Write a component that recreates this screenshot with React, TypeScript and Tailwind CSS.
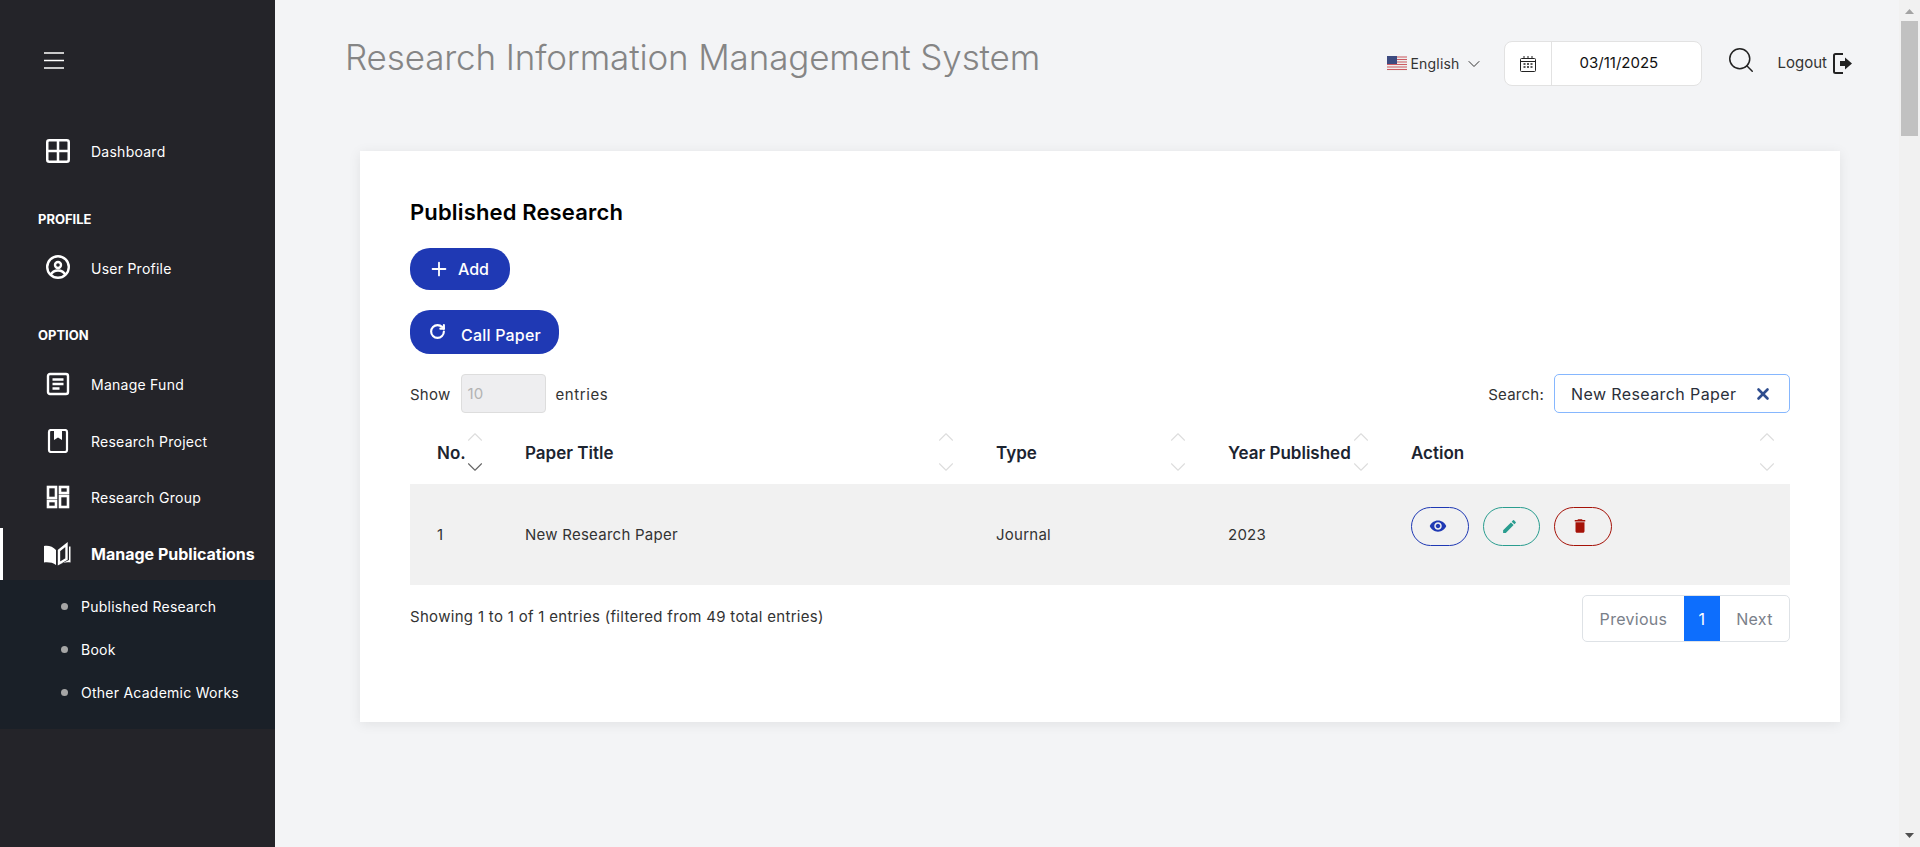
/**
 * Published Research page - sidebar, header and filtered table
 */

import { useState } from 'react';
import type { ReactNode } from 'react';
import { ChevronDown, ChevronUp, RotateCw, Search, Plus, X } from 'lucide-react';

const font = 'font-[Inter,"Liberation_Sans",sans-serif]';

function SideItem({ icon, label, active }: { icon: ReactNode; label: string; active?: boolean }) {
  return (
    <div className={`flex h-[52px] items-center ${active ? 'border-l-[3px] border-white pl-[43px]' : 'pl-[46px]'}`}>
      <span className="flex w-[45px] shrink-0 text-white">{icon}</span>
      <span className={`text-white ${active ? 'text-[16px] font-bold' : 'text-[14px] tracking-[0.25px]'}`}>{label}</span>
    </div>
  );
}

function SortHead({ label, width, active }: { label: string; width: string; active?: boolean }) {
  return (
    <th className={`relative h-[61px] pl-[27px] pr-0 text-left text-[17px] font-semibold text-[#1c2430] ${width}`}>
      {label}
      <span className="absolute right-[10px] top-[1px] flex h-[56px] flex-col justify-between">
        <ChevronUp size={26} strokeWidth={1} className="text-[#dddddd]" />
        <ChevronDown size={26} strokeWidth={1} className={active ? 'text-[#666666]' : 'text-[#dddddd]'} />
      </span>
    </th>
  );
}

function RowButton({ color, width, children }: { color: string; width: string; children: ReactNode }) {
  return <button className={`flex h-[39px] items-center justify-center rounded-full border pr-[5px] ${width} ${color}`}>{children}</button>;
}

export default function App() {
  const [query] = useState('New Research Paper');

  return (
    <div className={`flex h-[847px] overflow-hidden bg-[#f3f4f6] ${font}`}>
      {/* Sidebar */}
      <aside className="flex w-[275px] shrink-0 flex-col bg-[#242429]">
        <div className="h-[125px] pl-[44px] pt-[52px]">
          <HamburgerIcon />
        </div>
        <SideItem icon={<WindowIcon />} label="Dashboard" />
        <p className="mt-[32px] pl-[38px] text-[13px] font-bold leading-[20px] text-white">PROFILE</p>
        <div className="mt-[13px]">
          <SideItem icon={<UserCircleIcon />} label="User Profile" />
        </div>
        <p className="mt-[31px] pl-[38px] text-[13px] font-bold leading-[20px] text-white">OPTION</p>
        <div className="mt-[13px] flex flex-col gap-[5px]">
          <SideItem icon={<NoteIcon />} label="Manage Fund" />
          <SideItem icon={<BookmarkIcon />} label="Research Project" />
          <div className="-mt-[1px]">
            <SideItem icon={<GroupIcon />} label="Research Group" />
          </div>
          <SideItem icon={<OpenBookIcon />} label="Manage Publications" active />
        </div>
        <div className="h-[149px] bg-[#1a2028] pl-[61px] pt-[5px]">
          {['Published Research', 'Book', 'Other Academic Works'].map((item) => (
            <div key={item} className="flex h-[43px] items-center">
              <span className="mr-[13px] h-[7px] w-[7px] rounded-full bg-[#a6a6a6]" />
              <span className="text-[14px] tracking-[0.25px] text-white">{item}</span>
            </div>
          ))}
        </div>
      </aside>

      {/* Main Content */}
      <main className="min-w-0 flex-1">
        <header className="flex h-[117px] items-start pl-[70px] pr-[47px]">
          <h1 className="mt-[31px] text-[35px] font-light tracking-[-0.14px] text-[#858585]">Research Information Management System</h1>
          <div className="ml-auto mt-[41px] flex items-center">
            <FlagIcon />
            <span className="ml-[3px] text-[14px] tracking-[0.2px] text-[#333333]">English</span>
            <ChevronUp size={20} strokeWidth={1.2} className="ml-[4px] rotate-180 text-[#333333]" />
            <div className="ml-[20px] flex h-[45px] w-[198px] items-center rounded-[8px] border border-[#e2e2e2] bg-white">
              <div className="flex h-full w-[47px] items-center justify-center border-r border-[#e2e2e2]">
                <CalendarIcon />
              </div>
              <span className="pl-[28px] text-[15px] text-[#111111]">03/11/2025</span>
            </div>
            <Search size={30} strokeWidth={1.2} className="ml-[24px] -mt-[8px] text-[#222222]" />
            <span className="ml-[22px] text-[15px] text-[#333333]">Logout</span>
            <LogoutIcon />
          </div>
        </header>

        <section className="ml-[85px] mt-[34px] h-[571px] w-[1480px] bg-white px-[50px] pt-[46px] shadow-[0_2px_12px_rgba(0,0,0,0.08)]">
          <h2 className="text-[22px] font-semibold leading-[30px] tracking-[0.15px] text-black">Published Research</h2>

          <button className="mt-[21px] flex h-[42px] w-[100px] items-center rounded-[20px] bg-[#1f39b4] pl-[18px] text-[16px] font-medium text-white">
            <Plus size={22} strokeWidth={2} className="mr-[8px]" />
            Add
          </button>
          <button className="mt-[20px] flex h-[44px] w-[149px] items-center rounded-[20px] bg-[#1f39b4] pl-[19px] text-[16px] font-medium tracking-[0.2px] text-white">
            <RotateCw size={17} strokeWidth={3} className="mb-[2px] mr-[15px]" />
            <span className="mt-[6px]">Call Paper</span>
          </button>

          {/* Table controls */}
          <div className="mt-[20px] flex h-[39px] items-center text-[15px] tracking-[0.25px] text-[#333333]">
            <span className="mt-[4px]">Show</span>
            <div className="ml-[10px] flex h-[39px] w-[85px] items-center rounded-[4px] border border-[#dddddd] bg-[#eeeef0] pl-[6px] pt-[2px] text-[#b3b3b3]">10</div>
            <span className="ml-[10px] mt-[4px] tracking-[0.6px]">entries</span>
            <span className="ml-auto mt-[4px]">Search:</span>
            <div className="ml-[10px] flex h-[39px] w-[236px] items-center rounded-[5px] border border-[#86b7fe] pl-[16px] pr-[17px] text-[16px] tracking-[0.4px] text-[#2a2f3a]">
              {query}
              <X size={18} strokeWidth={3.500} className="ml-auto text-[#2f4d8e]" />
            </div>
          </div>

          <table className="mt-[10px] w-full table-fixed border-collapse">
            <thead>
              <tr>
                <SortHead label="No." width="w-[88px]" active />
                <SortHead label="Paper Title" width="w-[471px]" />
                <SortHead label="Type" width="w-[232px]" />
                <SortHead label="Year Published" width="w-[183px]" />
                <SortHead label="Action" width="" />
              </tr>
            </thead>
            <tbody>
              <tr className="h-[101px] bg-[#f1f1f1] text-[15px] tracking-[0.25px] text-[#333333]">
                <td className="pl-[27px] pt-[2px]">1</td>
                <td className="pl-[27px] pt-[2px]">New Research Paper</td>
                <td className="pl-[27px] pt-[2px]">Journal</td>
                <td className="pl-[27px] pt-[2px]">2023</td>
                <td className="pl-[27px]">
                  <div className="-mt-[17px] flex gap-[14px]">
                    <RowButton color="border-[#1f39b4]" width="w-[58px]">
                      <EyeIcon />
                    </RowButton>
                    <RowButton color="border-[#2a9d8f]" width="w-[57px]">
                      <PencilIcon />
                    </RowButton>
                    <RowButton color="border-[#a51208]" width="w-[58px]">
                      <TrashIcon />
                    </RowButton>
                  </div>
                </td>
              </tr>
            </tbody>
          </table>

          {/* Footer */}
          <div className="mt-[10px] flex items-start text-[15px] tracking-[0.31px] text-[#333333]">
            <span className="mt-[11px]">Showing 1 to 1 of 1 entries (filtered from 49 total entries)</span>
            <div className="ml-auto flex h-[47px] items-stretch rounded-[5px] border border-[#dee2e6] text-[16px] tracking-[0.3px]">
              <span className="flex w-[101px] items-center justify-center text-[#7a808a]">Previous</span>
              <span className="flex w-[36px] items-center justify-center bg-[#0d6efd] text-white">1</span>
              <span className="flex w-[69px] items-center justify-center text-[#7a808a]">Next</span>
            </div>
          </div>
        </section>
      </main>

      {/* Scrollbar */}
      <div className="flex w-[21px] shrink-0 flex-col items-center bg-[#f1f1f1] pb-[9px] pt-[9px]">
        <svg width="9" height="5" viewBox="0 0 9 5" className="shrink-0">
          <path d="M4.500 0 9 5H0z" fill="#a3a3a3" />
        </svg>
        <div className="mt-[7px] h-[115px] w-[17px] bg-[#c1c1c1]" />
        <svg width="9" height="5" viewBox="0 0 9 5" className="mt-auto shrink-0">
          <path d="M0 0h9L4.500 5z" fill="#505050" />
        </svg>
      </div>
    </div>
  );
}

function HamburgerIcon() {
  return (
    <svg width="20" height="17" viewBox="0 0 20 17" stroke="white" strokeWidth="1.500">
      <path d="M0 1h20M0 8.500h20M0 16h20" />
    </svg>
  );
}

function WindowIcon() {
  return (
    <svg width="24" height="24" viewBox="0 0 24 24" fill="none" stroke="white" strokeWidth="2.500">
      <rect x="1.250" y="1.250" width="21.500" height="21.500" rx="2" />
      <path d="M12 1v22M1 12h22" />
    </svg>
  );
}

function UserCircleIcon() {
  return (
    <svg width="24" height="24" viewBox="0 0 24 24" fill="none" stroke="white" strokeWidth="2.400" className="-mt-[2px]">
      <circle cx="12" cy="12" r="10.800" />
      <circle cx="12" cy="10" r="3" />
      <path d="M4.500 20c1.500-3 4.500-4.500 7.500-4.500s6 1.500 7.500 4.500" />
    </svg>
  );
}

function NoteIcon() {
  return (
    <svg width="24" height="24" viewBox="0 0 24 24" fill="none" stroke="white" strokeWidth="2.400">
      <rect x="2" y="2" width="20" height="20" rx="2" />
      <path d="M6.500 7.500h11M6.500 12h11M6.500 16.500h7" />
    </svg>
  );
}

function BookmarkIcon() {
  return (
    <svg width="24" height="24" viewBox="0 0 24 24" fill="none" stroke="white" strokeWidth="2.200">
      <rect x="3" y="1" width="18" height="22" rx="2" />
      <path d="M8 1h8v10l-4-2.500L8 11z" fill="white" stroke="none" />
    </svg>
  );
}

function GroupIcon() {
  return (
    <svg width="24" height="24" viewBox="0 0 24 24" fill="none" stroke="white" strokeWidth="2.600">
      <rect x="2" y="2" width="8" height="11" />
      <rect x="14" y="2" width="8" height="6" />
      <rect x="2" y="16" width="8" height="6" />
      <rect x="14" y="11" width="8" height="11" />
    </svg>
  );
}

function OpenBookIcon() {
  return (
    <svg width="27" height="24" viewBox="0 0 27 24" className="-ml-[2px]">
      <path d="M0 4c4-1 9 .5 12 4v15c-3-2.500-8-3-12-2.500z" fill="white" />
      <path d="M15 8.500 22.500 2.500v14.500l-7.500 4.500z" fill="none" stroke="white" strokeWidth="2.400" />
      <path d="M25 4.500h1.500v16c-4-.5-8.500 0-12 2.500l10.500-5z" fill="white" />
    </svg>
  );
}

function FlagIcon() {
  return (
    <svg width="20" height="15" viewBox="0 0 20 15">
      <rect width="20" height="15" fill="#eeeeee" />
      <path d="M0 1h20M0 3.500h20M0 6h20M0 8.500h20M0 11h20M0 13.500h20" stroke="#cc5a62" strokeWidth="1.100" />
      <rect width="10" height="8" fill="#3c4a80" />
    </svg>
  );
}

function CalendarIcon() {
  return (
    <svg width="16" height="16" viewBox="0 0 16 16" fill="none" stroke="#222222">
      <rect x="0.500" y="2.500" width="15" height="13" rx="1" />
      <path d="M4 0v3M8 0v3M12 0v3M0.500 5.500h15" />
      <path d="M3.500 8h2M7 8h2M10.500 8h2M3.500 11h2M7 11h2M10.500 11h2" strokeWidth="1.500" />
    </svg>
  );
}

function LogoutIcon() {
  return (
    <svg width="19" height="21" viewBox="0 0 19 21" fill="none" className="ml-[6px]">
      <path d="M10 1H2.500A1.500 1.500 0 0 0 1 2.500v16A1.500 1.500 0 0 0 2.500 20H10" stroke="#222222" strokeWidth="2" />
      <path d="M7 8h5V4.500l7 6-7 6V13H7z" fill="#222222" />
    </svg>
  );
}

function EyeIcon() {
  return (
    <svg width="18" height="18" viewBox="0 0 24 24" fill="#1f39b4">
      <path d="M12 4.500C7 4.500 2.730 7.610 1 12c1.730 4.390 6 7.500 11 7.500s9.270-3.110 11-7.500c-1.730-4.390-6-7.500-11-7.500zM12 17c-2.760 0-5-2.240-5-5s2.240-5 5-5 5 2.240 5 5-2.240 5-5 5zm0-8c-1.660 0-3 1.340-3 3s1.340 3 3 3 3-1.340 3-3-1.340-3-3-3z" />
    </svg>
  );
}

function PencilIcon() {
  return (
    <svg width="17" height="17" viewBox="0 0 24 24" fill="#2a9d8f">
      <path d="M3 17.250V21h3.750L17.810 9.940l-3.750-3.750L3 17.250zM20.710 7.040a1 1 0 0 0 0-1.410l-2.340-2.340a1 1 0 0 0-1.410 0l-1.830 1.830 3.750 3.750 1.830-1.830z" />
    </svg>
  );
}

function TrashIcon() {
  return (
    <svg width="18" height="18" viewBox="0 0 24 24" fill="#a51208" className="mr-[2px]">
      <path d="M6 19c0 1.100.9 2 2 2h8c1.100 0 2-.9 2-2V7H6v12zM19 4h-3.500l-1-1h-5l-1 1H5v2h14V4z" />
    </svg>
  );
}
